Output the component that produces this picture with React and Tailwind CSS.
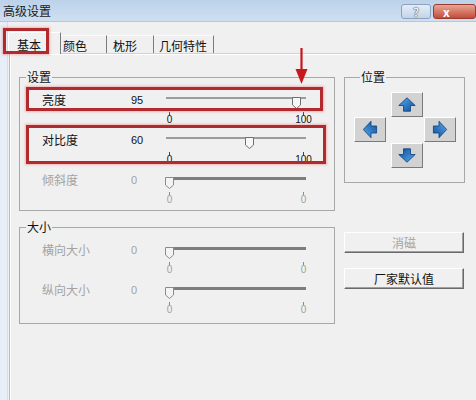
import React from 'react'

const cjk = "font-['Noto_Sans_CJK_SC','Noto_Sans',sans-serif]"
const num = "font-['Liberation_Sans','DejaVu_Sans',sans-serif]"

function Thumb({ disabled }) {
  return (
    <svg width="9" height="12" viewBox="0 0 9 12">
      <path
        d="M0.5 0.5 H8.5 V8 L4.5 11.5 L0.5 8 Z"
        fill={disabled ? '#f4f4f4' : '#f7f7f7'}
        stroke={disabled ? '#8a8a8a' : '#6f6f6f'}
      />
    </svg>
  )
}

function Slider({ value, disabled, max }) {
  const center = 3 + (134 * value) / 100
  return (
    <div className="w-[146px] mt-[2px]">
      <div className="relative h-[12px]">
        {disabled ? (
          <div className="mt-[4px] ml-[5px] w-[135px] h-[3px] bg-[#7d7d7d]"></div>
        ) : (
          <div className="mt-[4px] w-[140px] h-[2px] bg-[#9c9c9c]"></div>
        )}
        <div className="absolute top-0" style={{ left: center - 4.5 }}>
          <Thumb disabled={disabled} />
        </div>
      </div>
      <div className="flex justify-between w-[135px] ml-[3px] mt-[3px]">
        <div className={`w-px h-[3px] ${disabled ? 'bg-[#8a8a8a]' : 'bg-[#444]'}`}></div>
        <div className={`w-px h-[3px] ${disabled ? 'bg-[#8a8a8a]' : 'bg-[#444]'}`}></div>
      </div>
      <div className={`flex justify-between w-[135px] ml-[3px] text-[10px] leading-[10px] ${num} ${disabled ? 'text-[#a0a0a0]' : 'text-[#111]'}`}>
        <div className="w-px flex justify-center whitespace-nowrap">0</div>
        <div className="w-px flex justify-center whitespace-nowrap">{max}</div>
      </div>
    </div>
  )
}

function Row({ label, value, disabled, max }) {
  const color = disabled ? 'text-[#a3a3a3]' : 'text-[#111]'
  return (
    <div className="flex h-[40px]">
      <div className={`w-[111px] pl-[22px] mt-[2px] text-[12px] leading-[14px] ${color}`}>{label}</div>
      <div className={`w-[35px] mt-[2px] text-[11px] leading-[14px] ${num} ${color}`}>{value}</div>
      <Slider value={value} disabled={disabled} max={max} />
    </div>
  )
}

function Arrow({ rotate }) {
  return (
    <svg width="18" height="15" viewBox="0 0 18 15" style={{ transform: `rotate(${rotate}deg)` }}>
      <defs>
        <linearGradient id={`ag${rotate}`} x1="0" y1="0" x2="1" y2="1">
          <stop offset="0" stopColor="#5aa9ea" />
          <stop offset="1" stopColor="#0b4f9e" />
        </linearGradient>
      </defs>
      <path d="M9 0.8 L17.2 8.5 L12.5 8.5 L12.5 14.2 L5.5 14.2 L5.5 8.5 L0.8 8.5 Z" fill={`url(#ag${rotate})`} stroke="#0a3d78" strokeWidth="0.8" />
    </svg>
  )
}

function ArrowButton({ rotate, className }) {
  return (
    <div className={`w-[32px] h-[25px] flex items-center justify-center bg-[#d2d2d2] border border-t-white border-l-white border-b-[#7a7a7a] border-r-[#7a7a7a] ${className}`}>
      <Arrow rotate={rotate} />
    </div>
  )
}

function Button({ children, disabled, className }) {
  return (
    <div className={`w-[120px] h-[21px] flex items-center justify-center text-[12px] bg-[#f0f0f0] border border-t-white border-l-white border-b-[#6a6a6a] border-r-[#6a6a6a] shadow-[inset_-1px_-1px_0_#a0a0a0] ${disabled ? 'text-[#a3a3a3]' : 'text-[#111]'} ${className}`}>
      {children}
    </div>
  )
}

function Group({ title, className, children }) {
  return (
    <fieldset className={`border border-[#a8a8a8] ${className}`}>
      <legend className="ml-[6px] px-[1px] text-[12px] leading-[14px] text-[#111]">{title}</legend>
      {children}
    </fieldset>
  )
}

export default function App() {
  return (
    <div className={`relative w-[476px] h-[400px] overflow-hidden bg-[#f0f0f0] ${cjk}`}>
      {/* title bar */}
      <div className="h-[22px] flex items-start bg-gradient-to-b from-[#bcd2ea] to-[#cfdff0] border-b border-[#b5c7dc]">
        <div className="ml-[3px] mt-[4px] text-[12px] leading-[14px] text-[#1a1a1a]">高级设置</div>
        <div className="ml-auto mt-[4px] flex gap-[2px]">
          <div className="w-[30px] h-[15px] rounded-[3px] border border-[#8aa2c2] bg-gradient-to-b from-[#e4edf7] to-[#c3d4e8] flex items-center justify-center text-[12px] font-bold leading-none text-[#e8eef6] [text-shadow:0_0_1px_#3c4a5c,0_0_1px_#3c4a5c]">?</div>
          <div className="w-[43px] h-[15px] rounded-[3px] border border-[#9a3b30] bg-gradient-to-b from-[#e7a595] to-[#c34a3c] flex items-center justify-start pl-[9px] text-[12px] font-bold leading-none text-white">x</div>
        </div>
      </div>

      <div className="flex h-[378px]">
        <div className="w-[8px] bg-[#e7eef7] border-r border-[#d8dde3]"></div>
        <div className="flex-1 flex flex-col">
          {/* tabs */}
          <div className="h-[31px] flex items-end text-[12px] leading-[14px] text-[#111]">
            <div className="w-[53px] h-[22px] pl-[8px] pt-[5px] border-t border-l border-r border-t-white border-l-white border-r-[#7c7c7c] bg-[#f0f0f0] relative z-10 -mb-px">基本</div>
            <div className="w-[46px] h-[18px] pl-[2px] pt-[3px] border-t border-r border-t-[#fafafa] border-r-[#7c7c7c]">颜色</div>
            <div className="w-[47px] h-[18px] pl-[6px] pt-[3px] border-t border-r border-t-[#fafafa] border-r-[#7c7c7c]">枕形</div>
            <div className="w-[60px] h-[18px] pl-[5px] pt-[3px] border-t border-r border-t-[#fafafa] border-r-[#7c7c7c]">几何特性</div>
          </div>

          {/* panel */}
          <div className="flex-1 ml-[1px] border-t border-l border-t-[#d2d2d2] border-l-[#bdbdbd] shadow-[inset_1px_1px_0_#ffffff] pl-[9px] pt-[16px] flex">
            <div className="w-[316px] flex flex-col">
              <Group title="设置" className="h-[141px] pt-[7px]">
                <Row label="亮度" value={95} max="100" />
                <Row label="对比度" value={60} max="100" />
                <Row label="倾斜度" value={0} max="0" disabled />
              </Group>
              <Group title="大小" className="h-[104px] mt-[9px] pt-[7px]">
                <Row label="横向大小" value={0} max="0" disabled />
                <Row label="纵向大小" value={0} max="0" disabled />
              </Group>
            </div>

            <div className="w-[121px] ml-[9px] flex flex-col">
              <Group title="位置" className="h-[113px] pt-[8px] pl-[9px]">
                <div className="grid grid-cols-[37px_33px_32px] grid-rows-[25px_26px_25px]">
                  <div></div>
                  <ArrowButton rotate={0} />
                  <div></div>
                  <ArrowButton rotate={-90} />
                  <div></div>
                  <ArrowButton rotate={90} />
                  <div></div>
                  <ArrowButton rotate={180} />
                  <div></div>
                </div>
              </Group>
              <Button disabled className="mt-[49px]">消磁</Button>
              <Button className="mt-[15px]">厂家默认值</Button>
            </div>
          </div>
        </div>
      </div>

      {/* red annotations */}
      <div className="absolute left-[3px] top-[28px] w-[46px] h-[26px] border-[3px] border-[#b02a2e] shadow-[0_0_2px_1px_rgba(240,140,140,0.6)] z-20"></div>
      <div className="absolute left-[26px] top-[87px] w-[297px] h-[24px] border-[3px] border-[#b02a2e] shadow-[0_0_2px_1px_rgba(240,140,140,0.6)]"></div>
      <div className="absolute left-[26px] top-[125px] w-[300px] h-[39px] border-[3px] border-[#b02a2e] shadow-[0_0_2px_1px_rgba(240,140,140,0.6)]"></div>
      <svg className="absolute left-[295px] top-[47px]" width="13" height="38" viewBox="0 0 13 38">
        <line x1="6.5" y1="1" x2="6.5" y2="26" stroke="#c8171d" strokeWidth="2.2" />
        <path d="M0.5 22 L12.5 22 L6.5 37 Z" fill="#c8171d" />
      </svg>
    </div>
  )
}
